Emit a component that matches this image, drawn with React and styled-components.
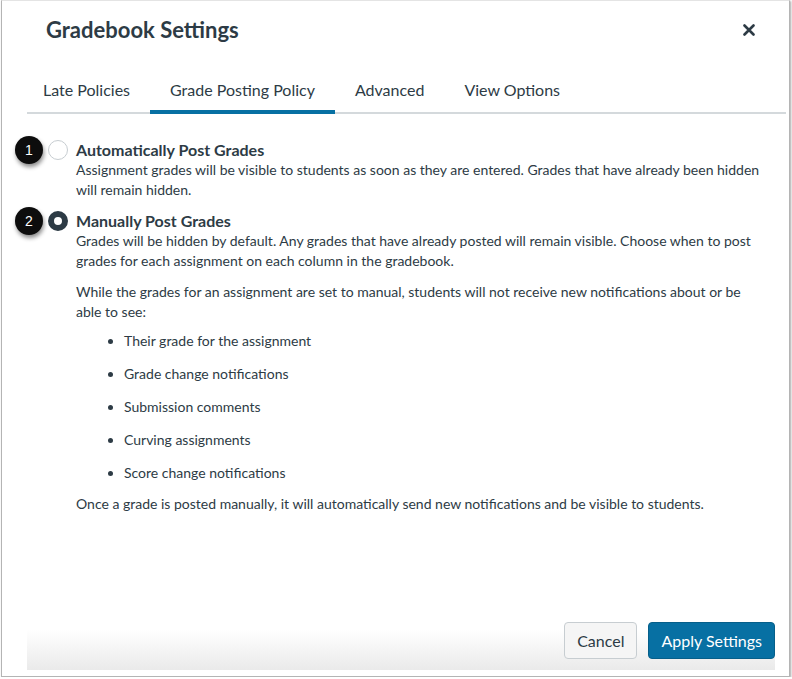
import React, { useState } from 'react';
import styled, { createGlobalStyle } from 'styled-components';

const GlobalStyle = createGlobalStyle`
  html, body {
    margin: 0;
    padding: 0;
    background: #ffffff;
  }
  body {
    font-family: Lato, "Open Sans", "Liberation Sans", sans-serif;
    color: #2d3b45;
  }
`;

const Frame = styled.div`
  position: relative;
  box-sizing: border-box;
  width: 789px;
  height: 677px;
  margin-left: 1px;
  display: flex;
  flex-direction: column;
  background: #ffffff;
  border: 1px solid #b4b4b4;
  border-top-color: #e4e4e4;
  box-shadow: 1px 1px 2px rgba(0, 0, 0, 0.35);
`;

const Header = styled.header`
  display: flex;
  align-items: center;
  justify-content: space-between;
  height: 57px;
  padding: 0 28px 0 44px;
`;

const Title = styled.h1`
  margin: 0;
  font-size: 22px;
  font-weight: 700;
  color: #2d3b45;
`;

const CloseButton = styled.button`
  display: flex;
  align-items: center;
  justify-content: center;
  width: 24px;
  height: 24px;
  padding: 0;
  border: 0;
  background: none;
  color: #2d3b45;
  cursor: pointer;
`;

const TabBar = styled.div`
  margin: 10px 3px 0 25px;
  border-bottom: 2px solid #d4d9dc;
`;

const TabList = styled.div`
  display: flex;
  margin-left: -4px;
`;

const Tab = styled.button`
  height: 46px;
  padding: 0 20px;
  margin-bottom: -2px;
  border: 0;
  border-bottom: 4px solid ${({ $active }) => ($active ? '#0770a3' : 'transparent')};
  background: none;
  font-family: inherit;
  font-size: 16px;
  color: #2d3b45;
  cursor: pointer;
`;

const Content = styled.div`
  padding: 26px 24px 0 46px;
`;

const Option = styled.div`
  position: relative;
  display: grid;
  grid-template-columns: 20px 1fr;
  column-gap: 8px;
  margin-bottom: ${({ $last }) => ($last ? '0' : '12px')};
`;

const Radio = styled.span`
  box-sizing: border-box;
  width: 20px;
  height: 20px;
  border-radius: 50%;
  background: #ffffff;
  border: ${({ $checked }) => ($checked ? '6px solid #2d3b45' : '1px solid #c7cdd1')};
  cursor: pointer;
`;

const Badge = styled.span`
  position: absolute;
  left: -33px;
  top: -4px;
  width: 28px;
  height: 28px;
  border-radius: 50%;
  background: #0d0d0d;
  color: #ffffff;
  font-family: "Liberation Sans", Arial, sans-serif;
  font-size: 14px;
  line-height: 28px;
  text-align: center;
  box-shadow: 1px 3px 4px rgba(0, 0, 0, 0.45);
`;

const OptionLabel = styled.div`
  font-size: 16px;
  font-weight: 700;
  line-height: 20px;
`;

const Text = styled.p`
  margin: ${({ $top }) => $top || '0'} 0 0;
  font-size: 14px;
  line-height: 19.5px;
`;

const Bullets = styled.ul`
  margin: 10px 0 0;
  padding-left: 48px;
  font-size: 14px;
  line-height: 20px;

  li {
    margin-bottom: 13px;
  }
`;

const Footer = styled.footer`
  margin: auto 14px 6px 25px;
  height: 70px;
  padding-bottom: 11px;
  box-sizing: border-box;
  display: flex;
  align-items: flex-end;
  justify-content: flex-end;
  gap: 11px;
  background: linear-gradient(to bottom, #ffffff 0%, #ffffff 42%, #eaeaea 100%);
`;

const Button = styled.button`
  height: 37px;
  padding: 0 12px;
  border-radius: 4px;
  font-family: inherit;
  font-size: 16px;
  cursor: pointer;
  border: 1px solid ${({ $primary }) => ($primary ? '#065f8a' : '#c7cdd1')};
  background: ${({ $primary }) => ($primary ? '#0770a3' : '#f5f5f5')};
  color: ${({ $primary }) => ($primary ? '#ffffff' : '#2d3b45')};
`;

const tabs = ['Late Policies', 'Grade Posting Policy', 'Advanced', 'View Options'];

const hiddenItems = [
  'Their grade for the assignment',
  'Grade change notifications',
  'Submission comments',
  'Curving assignments',
  'Score change notifications',
];

export default function App() {
  const [activeTab, setActiveTab] = useState(1);
  const [policy, setPolicy] = useState('manual');

  return (
    <>
      <GlobalStyle />
      <Frame>
        <Header>
          <Title>Gradebook Settings</Title>
          <CloseButton aria-label="Close">
            <svg width="12" height="12" viewBox="0 0 12 12">
              <path d="M1.5 1.5 L10.5 10.5 M10.5 1.5 L1.5 10.5" stroke="currentColor" strokeWidth="2.6" strokeLinecap="round" />
            </svg>
          </CloseButton>
        </Header>

        <TabBar>
          <TabList>
            {tabs.map((t, i) => (
              <Tab key={t} $active={i === activeTab} onClick={() => setActiveTab(i)}>
                {t}
              </Tab>
            ))}
          </TabList>
        </TabBar>

        <Content>
          <Option>
            <Badge>1</Badge>
            <Radio $checked={policy === 'auto'} onClick={() => setPolicy('auto')} />
            <div>
              <OptionLabel>Automatically Post Grades</OptionLabel>
              <Text>
                Assignment grades will be visible to students as soon as they are entered. Grades that have already been hidden
                will remain hidden.
              </Text>
            </div>
          </Option>

          <Option $last>
            <Badge>2</Badge>
            <Radio $checked={policy === 'manual'} onClick={() => setPolicy('manual')} />
            <div>
              <OptionLabel>Manually Post Grades</OptionLabel>
              <Text>
                Grades will be hidden by default. Any grades that have already posted will remain visible. Choose when to post
                grades for each assignment on each column in the gradebook.
              </Text>
              <Text $top="12px">
                While the grades for an assignment are set to manual, students will not receive new notifications about or be
                able to see:
              </Text>
              <Bullets>
                {hiddenItems.map((item) => (
                  <li key={item}>{item}</li>
                ))}
              </Bullets>
              <Text $top="-2px">
                Once a grade is posted manually, it will automatically send new notifications and be visible to students.
              </Text>
            </div>
          </Option>
        </Content>

        <Footer>
          <Button>Cancel</Button>
          <Button $primary>Apply Settings</Button>
        </Footer>
      </Frame>
    </>
  );
}
